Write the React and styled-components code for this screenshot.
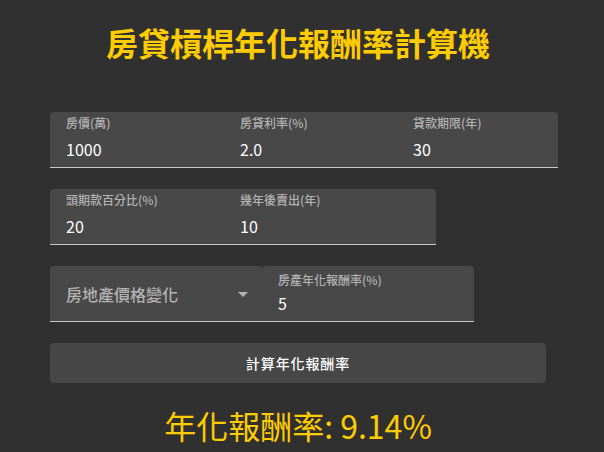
import React from 'react';
import styled, { createGlobalStyle } from 'styled-components';

const GlobalStyle = createGlobalStyle`
  body {
    margin: 0;
    background: #303030;
    font-family: "Noto Sans CJK TC", "Noto Sans", sans-serif;
    color: #fff;
  }
`;

const Page = styled.div`
  width: 496px;
  margin-left: 50px;
  padding-top: 22px;
`;

const Title = styled.h1`
  margin: 0 0 50px;
  font-size: 32px;
  line-height: 40px;
  font-weight: 700;
  color: #ffcc00;
  text-align: center;
`;

const Row = styled.div`
  display: grid;
  grid-template-columns: ${(p) => p.$cols};
  width: max-content;
  margin-bottom: 21px;
`;

const Field = styled.div`
  display: flex;
  flex-direction: column;
  height: 55px;
  padding: 0 16px;
  background: #484848;
  border-bottom: 1px solid rgba(255, 255, 255, 0.7);
  border-radius: ${(p) => p.$radius || '0'};
`;

const Label = styled.span`
  margin-top: ${(p) => p.$top || 3}px;
  font-size: 12px;
  line-height: 16px;
  font-weight: 500;
  color: #b3b3b3;
  white-space: nowrap;
`;

const Value = styled.span`
  margin-top: ${(p) => p.$top || 8}px;
  font-size: 16px;
  line-height: 20px;
  color: #fff;
`;

const Select = styled.div`
  display: flex;
  align-items: center;
  justify-content: space-between;
  height: 55px;
  padding: 0 7px 0 16px;
  background: #484848;
  border-bottom: 1px solid rgba(255, 255, 255, 0.7);
  border-radius: 4px 4px 0 0;
  font-size: 16px;
  font-weight: 500;
  color: #b3b3b3;
`;

const Button = styled.button`
  display: block;
  width: 496px;
  height: 40px;
  margin-bottom: 22px;
  border: none;
  border-radius: 4px;
  background: #474747;
  color: #fff;
  font-family: inherit;
  font-size: 14px;
  letter-spacing: 0.9px;
  font-weight: 500;
`;

const Result = styled.div`
  font-size: 32px;
  line-height: 40px;
  color: #ffcc00;
  text-align: center;
`;

const ArrowDrop = () => (
  <svg width="24" height="24" viewBox="0 0 24 24" fill="#b3b3b3">
    <path d="M7 10l5 5 5-5z" />
  </svg>
);

export default function App() {
  return (
    <Page>
      <GlobalStyle />
      <Title>房貸槓桿年化報酬率計算機</Title>
      <Row $cols="174px 173px 161px">
        <Field $radius="4px 0 0 0">
          <Label>房價(萬)</Label>
          <Value>1000</Value>
        </Field>
        <Field>
          <Label>房貸利率(%)</Label>
          <Value>2.0</Value>
        </Field>
        <Field $radius="0 4px 0 0">
          <Label>貸款期限(年)</Label>
          <Value>30</Value>
        </Field>
      </Row>
      <Row $cols="174px 212px">
        <Field $radius="4px 0 0 0">
          <Label>頭期款百分比(%)</Label>
          <Value>20</Value>
        </Field>
        <Field $radius="0 4px 0 0">
          <Label>幾年後賣出(年)</Label>
          <Value>10</Value>
        </Field>
      </Row>
      <Row $cols="212px 212px">
        <Select>
          <span>房地產價格變化</span>
          <ArrowDrop />
        </Select>
        <Field $radius="4px 4px 0 0">
          <Label $top={6}>房產年化報酬率(%)</Label>
          <Value $top={5}>5</Value>
        </Field>
      </Row>
      <Button>計算年化報酬率</Button>
      <Result>年化報酬率: 9.14%</Result>
    </Page>
  );
}
